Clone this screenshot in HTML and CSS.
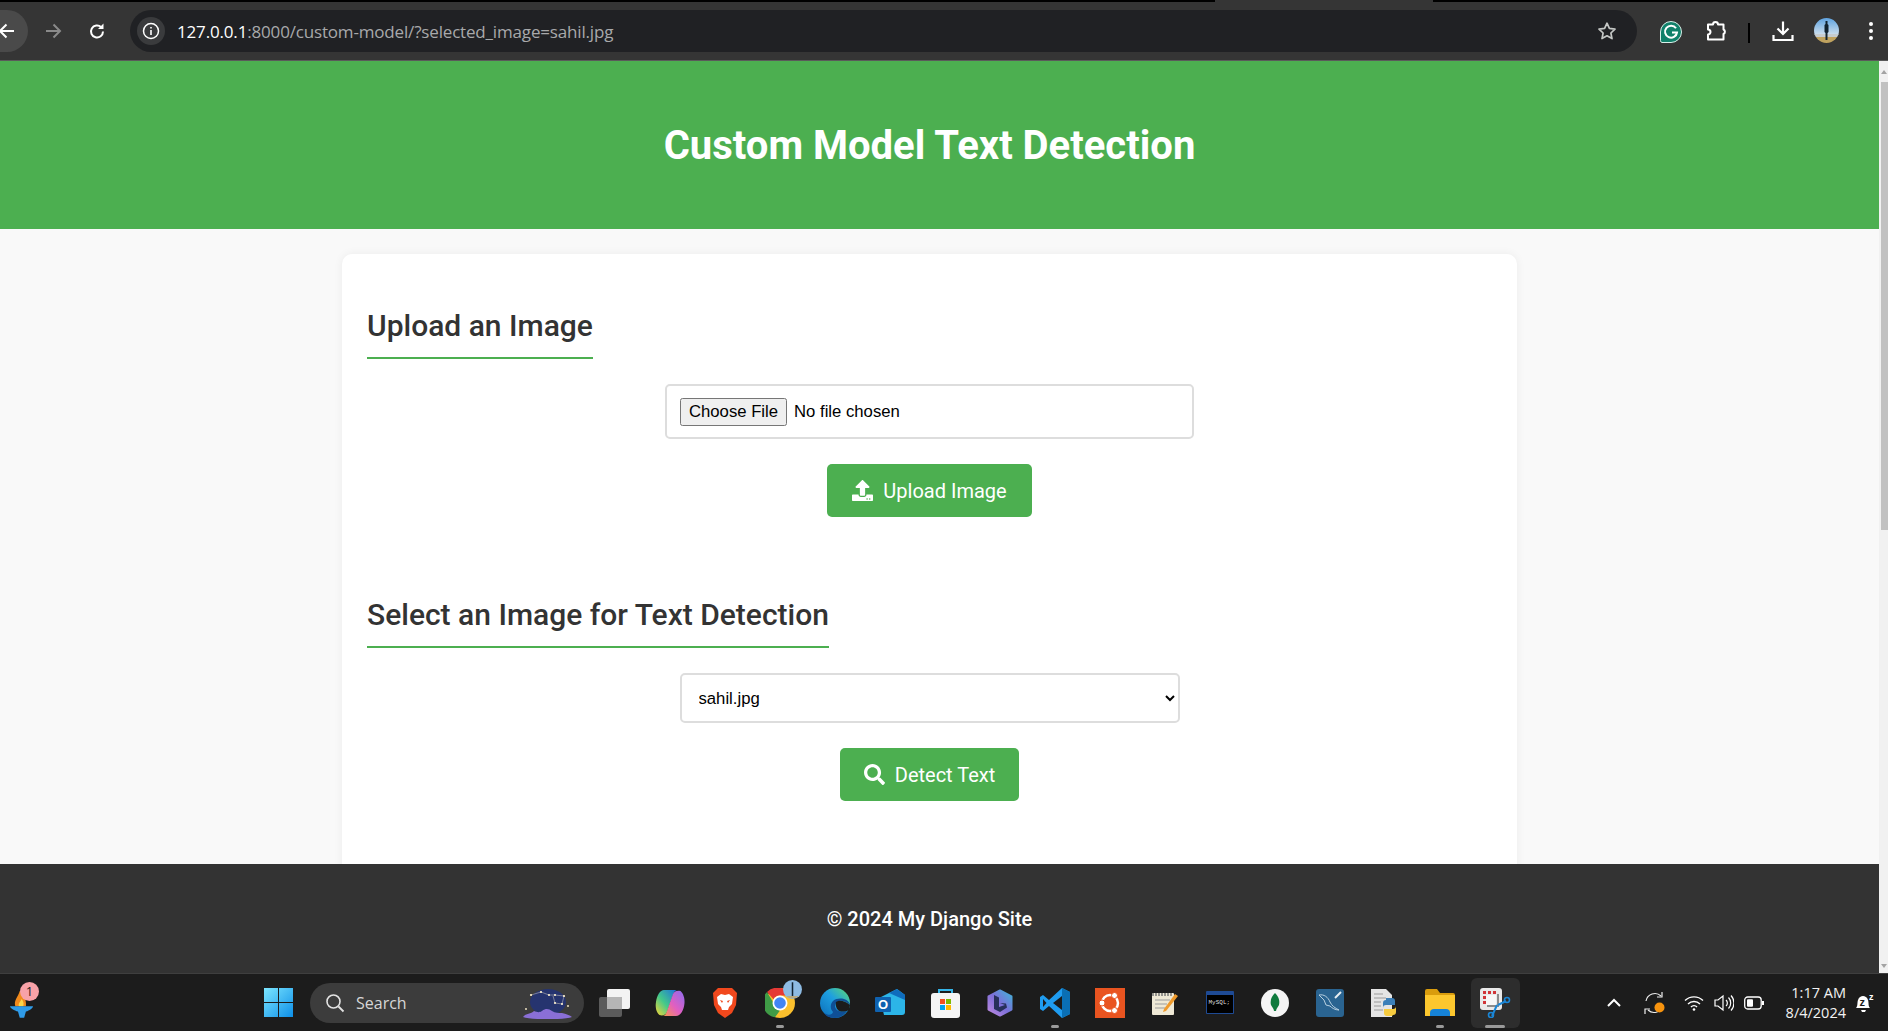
FILE: index.html
```html
<!DOCTYPE html>
<html>
  <head>
    <meta charset="utf-8" />
    <title>Custom Model Text Detection</title>
    <link rel="stylesheet" href="styles.css" />
  </head>
  <body>
    <!-- browser toolbar -->
    <div class="toolbar">
      <div class="tab-strip"><div class="active-tab"></div></div>
      <div class="toolbar-row">
        <div class="back">
          <svg width="20" height="20" viewBox="0 0 20 20"><path d="M17 10H3.500M9.500 3.500 3 10l6.500 6.500" fill="none" stroke="#fff" stroke-width="2"/></svg>
        </div>
        <svg class="fwd" width="20" height="20" viewBox="0 0 20 20"><path d="M3 10h13.500M10.500 3.500 17 10l-6.500 6.500" fill="none" stroke="#8a8a8a" stroke-width="2"/></svg>
        <svg class="reload" width="20" height="20" viewBox="0 0 20 20"><path d="M16 10.500a6 6 0 1 1-1.800-4.300" fill="none" stroke="#fff" stroke-width="2"/><path d="M16.500 2.500v5.500H11z" fill="#fff"/></svg>
        <div class="omnibox">
          <div class="info">
            <svg width="18" height="18" viewBox="0 0 18 18"><circle cx="9" cy="9" r="7.500" fill="none" stroke="#fff" stroke-width="1.500"/><path d="M9 8v5M9 5v1.600" stroke="#fff" stroke-width="1.600"/></svg>
          </div>
          <span class="url"><span class="host">127.0.0.1</span>:8000/custom-model/?selected_image=sahil.jpg</span>
          <svg class="star" width="20" height="20" viewBox="0 0 20 20"><path d="m10 2.200 2.400 5.200 5.600.7-4.100 3.900 1.100 5.600-5-2.800-5 2.800 1.100-5.600L2 8.100l5.600-.7z" fill="none" stroke="#c4c7c5" stroke-width="1.700" stroke-linejoin="round"/></svg>
        </div>
        <svg class="grammarly" width="24" height="24" viewBox="0 0 24 24"><path d="M12 1.500a10.500 10.500 0 1 1 0 21H3a1.800 1.800 0 0 1-1.500-1.800V12A10.500 10.500 0 0 1 12 1.500z" fill="#11806a" stroke="#d8efe9" stroke-width="1"/><path d="M17 8.300a6 6 0 1 0 1 4.200h-5" fill="none" stroke="#fff" stroke-width="2"/></svg>
        <svg class="puzzle" width="24" height="24" viewBox="0 0 24 24"><path d="M4 5.500h5a2.500 2.500 0 0 1 5 0h5.500v5a2.500 2.500 0 0 1 0 4.500v5.500H4v-5a2.500 2.500 0 0 0 0-5z" fill="none" stroke="#fff" stroke-width="2" stroke-linejoin="round"/></svg>
        <div class="divider"></div>
        <svg class="download" width="24" height="24" viewBox="0 0 24 24"><path d="M12 2.500v12M6.500 9.500l5.500 5.500 5.500-5.500M2.500 16v5h19v-5" fill="none" stroke="#fff" stroke-width="2.200"/></svg>
        <svg class="avatar" width="25" height="25" viewBox="0 0 25 25">
          <defs>
            <clipPath id="av"><circle cx="12.500" cy="12.500" r="12.500"/></clipPath>
            <linearGradient id="sky" x1="0" y1="0" x2="0" y2="1"><stop offset="0" stop-color="#5fa3e0"/><stop offset="1" stop-color="#cfe0ee"/></linearGradient>
          </defs>
          <g clip-path="url(#av)">
            <rect width="25" height="17" fill="url(#sky)"/>
            <rect y="16" width="25" height="3" fill="#c7cdd0"/>
            <rect y="19" width="25" height="6" fill="#bfa25f"/>
            <path d="M11.500 3h2v3l1 1v7l-1 1v7h-2v-7l-1-1V7l1-1z" fill="#10222f"/>
          </g>
        </svg>
        <svg class="dots" width="6" height="20" viewBox="0 0 6 20"><circle cx="3" cy="3" r="2" fill="#fff"/><circle cx="3" cy="10" r="2" fill="#fff"/><circle cx="3" cy="17" r="2" fill="#fff"/></svg>
      </div>
    </div>

    <!-- page viewport -->
    <div class="viewport">
      <div class="page">
        <header class="site-header">
          <h1>Custom Model Text Detection</h1>
        </header>
        <div class="content">
          <div class="card">
            <h2>Upload an Image</h2>
            <form class="form">
              <div class="file-box"><input type="file" /></div>
              <button type="button" class="btn">
                <svg width="21" height="21" viewBox="0 0 512 512"><path fill="#fff" d="M296 384h-80c-13.300 0-24-10.700-24-24V192h-87.700c-17.800 0-26.700-21.500-14.100-34.100L242.300 5.700c7.500-7.500 19.800-7.500 27.300 0l152.200 152.200c12.600 12.600 3.700 34.100-14.100 34.100H320v168c0 13.300-10.700 24-24 24zm216-8v112c0 13.300-10.700 24-24 24H24c-13.300 0-24-10.700-24-24V376c0-13.300 10.700-24 24-24h136v8c0 30.900 25.100 56 56 56h80c30.900 0 56-25.100 56-56v-8h136c13.300 0 24 10.700 24 24zm-124 88c0-11-9-20-20-20s-20 9-20 20 9 20 20 20 20-9 20-20zm64 0c0-11-9-20-20-20s-20 9-20 20 9 20 20 20 20-9 20-20z"/></svg>
                Upload Image
              </button>
            </form>
            <h2 class="second">Select an Image for Text Detection</h2>
            <form class="form">
              <select class="picker">
                <option>sahil.jpg</option>
              </select>
              <button type="button" class="btn btn-detect">
                <svg width="21" height="21" viewBox="0 0 512 512"><path fill="#fff" d="M505 442.700L405.300 343c-4.500-4.500-10.600-7-17-7H372c27.600-35.300 44-79.700 44-128C416 93.100 322.900 0 208 0S0 93.100 0 208s93.100 208 208 208c48.300 0 92.700-16.400 128-44v16.300c0 6.400 2.500 12.500 7 17l99.700 99.700c9.400 9.400 24.600 9.400 33.900 0l28.300-28.300c9.400-9.400 9.400-24.600.1-34zM208 336c-70.700 0-128-57.200-128-128 0-70.700 57.200-128 128-128 70.700 0 128 57.200 128 128 0 70.700-57.200 128-128 128z"/></svg>
                Detect Text
              </button>
            </form>
          </div>
        </div>
        <footer class="site-footer">© 2024 My Django Site</footer>
      </div>
      <div class="scrollbar">
        <div class="arrow-up"></div>
        <div class="thumb"></div>
        <div class="arrow-down"></div>
      </div>
    </div>

    <!-- windows taskbar -->
    <div class="taskbar">
      <div class="widget">
        <svg width="23" height="29" viewBox="0 0 26 32">
          <path d="M6 19C4 13 9 9 11 2c3 2 8 9 7 17z" fill="#f08a1d"/>
          <path d="M10 19c-1-3 2-5 3-8 2 2 3 5 2 8z" fill="#fbd54a"/>
          <path d="M0 19h26c0 2-4 5-8 6l-2 7h-5l-2-7c-4-1-9-4-9-6z" fill="#2f9be8"/>
        </svg>
        <span class="badge">1</span>
      </div>
      <svg class="start" width="29" height="29" viewBox="0 0 29 29">
        <defs><linearGradient id="win" x1="0" y1="0" x2="1" y2="1"><stop offset="0" stop-color="#7ce6ff"/><stop offset="1" stop-color="#0d8fe8"/></linearGradient></defs>
        <path d="M0 0h14v14H0zM15 0h14v14H15zM0 15h14v14H0zM15 15h14v14H15z" fill="url(#win)"/>
      </svg>
      <div class="search">
        <svg width="20" height="20" viewBox="0 0 20 20"><circle cx="8.500" cy="8.500" r="6.500" fill="none" stroke="#e3e3e3" stroke-width="1.600"/><path d="m13.500 13.500 5 5" stroke="#e3e3e3" stroke-width="1.800"/></svg>
        <span>Search</span>
        <svg class="search-art" width="50" height="32" viewBox="0 0 50 32">
          <ellipse cx="25" cy="15" rx="18" ry="13" fill="#26346f"/>
          <path d="M0 30c3-4 8-3 11-6 3 1 5 2 8 0 4-3 7-2 10 0 3 2 7 2 10 2 4 1 8 2 10 4-8 3-41 3-49 0z" fill="#8a6fd6"/>
          <path d="M8 8l10-3 8 3 6 0 9 1-2 8-7-1-2-7" fill="none" stroke="#cfc9c0" stroke-width=".5"/>
          <g fill="#fff3cf"><circle cx="8" cy="8" r="1.100"/><circle cx="18" cy="5" r="1.100"/><circle cx="26" cy="8" r="1.100"/><circle cx="32" cy="8" r="1.100"/><circle cx="41" cy="9" r="1.100"/><circle cx="39" cy="17" r="1.100"/><circle cx="32" cy="16" r="1.100"/><circle cx="3" cy="22" r=".9"/><circle cx="45" cy="19" r=".9"/></g>
        </svg>
      </div>
      <div class="apps">
        <!-- task view -->
        <div class="app">
          <svg width="32" height="30" viewBox="0 0 32 30"><rect x="0" y="9" width="23" height="20" rx="2" fill="#5b5b5b"/><rect x="8" y="1" width="23" height="20" rx="2" fill="#f3f3f3"/><rect x="8" y="9" width="15" height="12" fill="#b5b5b5"/></svg>
        </div>
        <!-- copilot -->
        <div class="app">
          <svg width="30" height="28" viewBox="0 0 30 28">
            <defs>
              <linearGradient id="cpa" x1="0" y1="1" x2="1" y2="0"><stop offset="0" stop-color="#f9d532"/><stop offset=".45" stop-color="#43c98a"/><stop offset="1" stop-color="#1c6fe0"/></linearGradient>
              <linearGradient id="cpb" x1="1" y1="0" x2="0" y2="1"><stop offset="0" stop-color="#8b6cf0"/><stop offset=".55" stop-color="#e25fc0"/><stop offset="1" stop-color="#f79a4a"/></linearGradient>
            </defs>
            <path d="M9 1h13c-2 .5-3 2-4 5l-6 17c-1 3-4.500 4-7.500 3C1.500 24 0 18 1 13 2 6 5 1 9 1z" fill="url(#cpa)"/>
            <path d="M21 27H8c2-.5 3-2 4-5l6-17c1-3 4.500-4 7.500-3 2.500 2 4.500 7 4 12-.5 7-4 13-8.500 13z" fill="url(#cpb)"/>
          </svg>
        </div>
        <!-- brave -->
        <div class="app">
          <svg width="26" height="30" viewBox="0 0 26 30">
            <path d="M6 0h14l5 5-1 12-4 8-7 5-7-5-4-8L1 5z" fill="#f1481d"/>
            <path d="M5 9l4-3 4 1 4-1 4 3-1 7-3 3-1 3h-6l-1-3-3-3z" fill="#fff"/>
            <path d="M8 12l3 1-1 2zM18 12l-3 1 1 2z" fill="#f1481d"/>
            <path d="M10.500 22h5L13 25z" fill="#f1481d"/>
          </svg>
        </div>
        <!-- chrome with profile badge -->
        <div class="app running">
          <svg width="30" height="30" viewBox="0 0 30 30">
            <circle cx="15" cy="15" r="15" fill="#fbc02d"/>
            <path d="M15 0a15 15 0 0 1 13 7.500H15a7.500 7.500 0 0 0-6.500 3.750L2 3.900A15 15 0 0 1 15 0z" fill="#e53935"/>
            <path d="M2 3.900l6.500 11.100a7.500 7.500 0 0 0 6.500 7.500L10 29.200A15 15 0 0 1 2 3.900z" fill="#3f9b46"/>
            <circle cx="15" cy="15" r="7.500" fill="#fff"/><circle cx="15" cy="15" r="5.800" fill="#4285f4"/>
          </svg>
          <svg class="chrome-badge" width="19" height="19" viewBox="0 0 25 25"><circle cx="12.500" cy="12.500" r="12.500" fill="#8dbbe3"/><path d="M4 21h17a12.500 12.500 0 0 1-17 0z" fill="#b9a981"/><path d="M11.500 3h2v18h-2z" fill="#10222f"/></svg>
        </div>
        <!-- edge -->
        <div class="app">
          <svg width="30" height="30" viewBox="0 0 30 30">
            <defs>
              <linearGradient id="edg" x1="0" y1="1" x2="1" y2="0"><stop offset="0" stop-color="#0c6cb8"/><stop offset=".55" stop-color="#1e9fe0"/><stop offset="1" stop-color="#5fdc6e"/></linearGradient>
            </defs>
            <circle cx="15" cy="15" r="15" fill="url(#edg)"/>
            <path d="M30 17c-3-3-7-5-11-4-4 1-5 5-3 8 2 3 7 3 11 2-2 3-6 7-12 7-6 0-9-2-11-5 5 3 8 2 9-1-3-3-3-8 0-11 5-4 14-3 17 3z" fill="#0f4f96"/>
            <path d="M16 14c3-2 8-2 14 3l-1 5c-4 2-9 2-11 0-2-2-3-6-2-8z" fill="#1c1c1c"/>
          </svg>
        </div>
        <!-- outlook -->
        <div class="app">
          <svg width="30" height="27" viewBox="0 0 30 27"><path d="M6 8 22 0l8 6v17a3 3 0 0 1-3 3H9l-1-4z" fill="#2cb5e8"/><path d="M14 4 22 0l8 6v5z" fill="#0f6cbd"/><rect x="0" y="8" width="16" height="15" rx="1" fill="#0f62b0"/><text x="8" y="20" class="outlook-o">O</text></svg>
        </div>
        <!-- store -->
        <div class="app">
          <svg width="29" height="30" viewBox="0 0 29 30"><path d="M8 6V2h13v4" fill="none" stroke="#35b5e8" stroke-width="2"/><rect x="0" y="5" width="29" height="25" rx="3" fill="#f4f4f4"/><rect x="9" y="11" width="5" height="5" fill="#f25022"/><rect x="15" y="11" width="5" height="5" fill="#7fba00"/><rect x="9" y="17" width="5" height="5" fill="#00a4ef"/><rect x="15" y="17" width="5" height="5" fill="#ffb900"/></svg>
        </div>
        <!-- bing -->
        <div class="app">
          <svg width="26" height="28" viewBox="0 0 26 28">
            <defs><linearGradient id="bng" x1="0" y1="1" x2="1" y2="0"><stop offset="0" stop-color="#c08ae0"/><stop offset=".5" stop-color="#7c6fd8"/><stop offset="1" stop-color="#3fb5d8"/></linearGradient></defs>
            <path d="M13 1.500l11.500 6v13l-11.500 6-11.500-6v-13z" fill="url(#bng)" stroke="url(#bng)" stroke-width="2" stroke-linejoin="round"/>
            <path d="M7 6l5 2.500V18l6-2-5-2 6 .5 1 4-7 4.500-6-3z" fill="#27305a"/>
          </svg>
        </div>
        <!-- vs code -->
        <div class="app running">
          <svg width="30" height="30" viewBox="0 0 30 30"><path d="M22 0l8 4v22l-8 4-13-12-6 5-3-2v-12l3-2 6 5z" fill="#1f9cf0"/><path d="M22 0l8 4v22l-8 4z" fill="#0a6fb5"/><path d="M22 8v14l-9-7z" fill="#1c1c1c"/><path d="M3 11l3.500 4L3 19z" fill="#1c1c1c"/></svg>
        </div>
        <!-- ubuntu -->
        <div class="app">
          <svg width="30" height="30" viewBox="0 0 30 30"><rect width="30" height="30" fill="#e95420"/><circle cx="15" cy="15" r="8" fill="none" stroke="#fff" stroke-width="2.500"/><circle cx="7" cy="15" r="3" fill="#fff" stroke="#e95420"/><circle cx="19.500" cy="7.500" r="3" fill="#fff" stroke="#e95420"/><circle cx="19.500" cy="22.500" r="3" fill="#fff" stroke="#e95420"/></svg>
        </div>
        <!-- notepad -->
        <div class="app">
          <svg width="26" height="24" viewBox="0 0 26 24"><rect y="2" width="22" height="22" rx="1" fill="#efe9d6"/><path d="M1 2v3M4 2v3M7 2v3M10 2v3M13 2v3M16 2v3M19 2v3" stroke="#777" stroke-width="1.500"/><path d="M3 9h15M3 13h12M3 17h10" stroke="#9b9b9b"/><path d="M12 18 23 3l3 2-12 15-3 1z" fill="#ef9a2c"/></svg>
        </div>
        <!-- mysql shell -->
        <div class="app">
          <svg width="28" height="23" viewBox="0 0 28 23"><rect width="28" height="23" rx="1" fill="#1e4a94"/><rect x="1" y="4" width="26" height="18" fill="#000"/><text x="2.500" y="13" class="mysql-label">MySQL;</text></svg>
        </div>
        <!-- mongo -->
        <div class="app">
          <svg width="28" height="28" viewBox="0 0 28 28"><circle cx="14" cy="14" r="14" fill="#f4f4f4"/><path d="M14 4c4 4 5 8 4 12-1 2-3 4-3 6h-2c0-2-2-4-3-6-1-4 0-8 4-12z" fill="#0f7a3d"/></svg>
        </div>
        <!-- mysql workbench -->
        <div class="app">
          <svg width="28" height="28" viewBox="0 0 28 28"><rect width="28" height="28" rx="3" fill="#2a6491"/><path d="M3 6c5-1 9 2 11 7 2 4 5 6 9 8-4 0-7-2-9-4l-4-1-2-5z" fill="none" stroke="#b8d0e0" stroke-width="1"/><path d="m19 9 6-6" stroke="#e8eef2" stroke-width="2"/></svg>
        </div>
        <!-- python file -->
        <div class="app">
          <svg width="28" height="28" viewBox="0 0 28 28"><path d="M0 0h15l6 6v22H0z" fill="#e4e4e4"/><path d="M3 5h9M3 9h12M3 13h7M3 17h7M3 21h9" stroke="#9a9a9a"/><path d="M15 9h6a3 3 0 0 1 3 3v4h-9a3 3 0 0 0-3 3v-5a3 3 0 0 1 3-3z" fill="#3b7fb8"/><path d="M21 27h-5a3 3 0 0 1-3-3v-4h9a3 3 0 0 0 3-3v6a3 3 0 0 1-3 3z" fill="#f6cb3f"/></svg>
        </div>
        <!-- file explorer -->
        <div class="app running">
          <svg width="30" height="27" viewBox="0 0 30 27"><path d="M0 2a2 2 0 0 1 2-2h10l3 4h13a2 2 0 0 1 2 2v4H0z" fill="#d99c0d"/><path d="M0 6h30v21H0z" fill="#fcc72e"/><path d="M5 27v-3a4 4 0 0 1 4-4h12a4 4 0 0 1 4 4v3z" fill="#1683d8"/></svg>
        </div>
        <!-- snipping tool -->
        <div class="app active">
          <svg width="31" height="30" viewBox="0 0 31 30"><rect width="22" height="22" rx="3" fill="#e9e9e9"/><path d="M3 3h3v3H3zM8 3h3v3H8zM13 3h3v3h-3zM3 8h3v3H3zM3 13h3v3H3z" fill="#d13438"/><path d="M6 7h10v10H6z" fill="#f7f7f7"/><path d="M7 18h11V6" fill="none" stroke="#8b8b8b" stroke-width="2"/><path d="M17 17 12 28M18 17l8-4" stroke="#1a86d6" stroke-width="2"/><circle cx="11" cy="27" r="2.500" fill="none" stroke="#1a86d6" stroke-width="1.600"/><circle cx="27" cy="12" r="2.500" fill="none" stroke="#1a86d6" stroke-width="1.600"/></svg>
        </div>
      </div>
      <div class="tray">
        <svg class="t-chev" width="16" height="10" viewBox="0 0 16 10"><path d="m2 8 6-6 6 6" fill="none" stroke="#fff" stroke-width="2"/></svg>
        <svg class="t-sync" width="22" height="22" viewBox="0 0 22 22"><path d="M2 9a9 9 0 0 1 15-5M19 13a9 9 0 0 1-15 5" fill="none" stroke="#eee" stroke-width="1.200"/><path d="M18 0v5h-5M1 22v-5h5" fill="none" stroke="#eee" stroke-width="1.200"/><circle cx="15.500" cy="15.500" r="5" fill="#f7930e"/></svg>
        <svg class="t-wifi" width="20" height="16" viewBox="0 0 20 16"><path d="M1 5.500a13 13 0 0 1 18 0M4 9a8.500 8.500 0 0 1 12 0M7 12a4 4 0 0 1 6 0" fill="none" stroke="#fff" stroke-width="1.400"/><circle cx="10" cy="14.500" r="1.300" fill="#fff"/></svg>
        <svg class="t-vol" width="20" height="18" viewBox="0 0 20 18"><path d="M1 6h3l5-4v14l-5-4H1z" fill="none" stroke="#fff" stroke-width="1.200"/><path d="M12 6a4 4 0 0 1 0 6M14.500 3.500a8 8 0 0 1 0 11M17 1.500a11 11 0 0 1 0 15" fill="none" stroke="#fff" stroke-width="1.200"/></svg>
        <svg class="t-bat" width="20" height="14" viewBox="0 0 20 14"><rect x=".7" y="1" width="16.500" height="12" rx="3" fill="none" stroke="#fff" stroke-width="1.300"/><rect x="3" y="3.200" width="6" height="7.600" rx="1" fill="#fff"/><rect x="18" y="5" width="2" height="4" fill="#fff"/></svg>
        <div class="clock">
          <span>1:17 AM</span>
          <span>8/4/2024</span>
        </div>
        <svg class="t-bell" width="20" height="20" viewBox="0 0 20 20"><path d="M1 15c2-2 1-5 2-8 1-3 3-4 5-4s4 1 5 4c1 3 0 6 2 8z" fill="#fff"/><path d="M6 17h5l-1 2H7z" fill="#fff"/><text x="4.500" y="13" class="bell-z">z</text><text x="14" y="7" class="bell-zz">z</text></svg>
      </div>
    </div>
  </body>
</html>
```

FILE: styles.css
```css
* {
  box-sizing: border-box;
}

html,
body {
  margin: 0;
  overflow: hidden;
}

body {
  height: 1031px;
  font-family: Roboto, sans-serif;
  background-color: #1c1c1c;
  display: flex;
  flex-direction: column;
}

/* browser toolbar */
.toolbar {
  height: 61px;
  background-color: #353535;
  border-bottom: 1px solid #5a5a5a;
  flex-shrink: 0;
}

.tab-strip {
  height: 2px;
  padding-left: 1215px;
  background-color: #000;
}

.active-tab {
  width: 218px;
  height: 2px;
  background-color: #353535;
}

.toolbar-row {
  height: 58px;
  padding-top: 8px;
  display: flex;
  align-items: flex-start;
}

.back {
  width: 28px;
  height: 42px;
  background-color: #4a4a4a;
  border-radius: 0 21px 21px 0;
  display: flex;
  align-items: center;
  justify-content: flex-end;
  padding-right: 11px;
  overflow: hidden;
}

.back svg {
  flex-shrink: 0;
}

.fwd {
  margin: 11px 0 0 15px;
}

.reload {
  margin: 11px 0 0 24px;
}

.omnibox {
  width: 1507px;
  height: 42px;
  margin-left: 23px;
  padding: 0 20px 0 7px;
  background-color: #202124;
  border-radius: 21px;
  display: flex;
  align-items: center;
}

.info {
  width: 28px;
  height: 28px;
  border-radius: 50%;
  background-color: #3a3b3d;
  display: flex;
  align-items: center;
  justify-content: center;
}

.url {
  margin-left: 12px;
  font-family: "Open Sans", sans-serif;
  font-size: 17px;
  letter-spacing: -0.17px;
  color: #a8a9ab;
}

.host {
  color: #fff;
}

.star {
  margin-left: auto;
}

.grammarly {
  margin: 10px 0 0 22px;
}

.puzzle {
  margin: 9px 0 0 21px;
}

.divider {
  width: 2px;
  height: 20px;
  margin: 13px 0 0 20px;
  background-color: #000;
}

.download {
  margin: 9px 0 0 21px;
}

.avatar {
  margin: 8px 0 0 19px;
}

.dots {
  margin: 11px 0 0 29px;
}

/* page */
.viewport {
  height: 912px;
  display: flex;
  flex-shrink: 0;
}

.page {
  flex: 1;
  min-width: 0;
  background-color: #f9f9f9;
  display: flex;
  flex-direction: column;
}

.site-header {
  height: 168px;
  padding-right: 20px;
  background-color: #4caf50;
  display: flex;
  align-items: center;
  justify-content: center;
  flex-shrink: 0;
}

h1 {
  margin: 0;
  font-size: 40px;
  font-weight: 700;
  color: #fff;
}

.content {
  flex: 1;
  min-height: 0;
  padding: 25px 20px 0 0;
  overflow: hidden;
}

.card {
  width: 1175px;
  margin: 0 auto;
  padding: 54px 25px 100px;
  background-color: #fff;
  border-radius: 10px;
  box-shadow: 0 0 10px rgba(0, 0, 0, 0.06);
}

h2 {
  display: table;
  margin: 0;
  padding-bottom: 14px;
  border-bottom: 2px solid #4caf50;
  font-size: 30px;
  line-height: 35px;
  font-weight: 500;
  color: #333;
}

h2.second {
  margin-top: 80px;
}

.form {
  margin-top: 25px;
  display: flex;
  flex-direction: column;
  align-items: center;
  gap: 25px;
}

.file-box {
  width: 529px;
  height: 55px;
  padding: 12px 13px;
  border: 2px solid #ddd;
  border-radius: 5px;
}

.file-box input {
  width: 100%;
  font-family: "Liberation Sans", sans-serif;
  font-size: 16.7px;
}

.file-box input::file-selector-button {
  padding: 2px 7px;
  margin-right: 7px;
}

.picker {
  width: 500px;
  height: 50px;
  padding: 0 17px 0 13px;
  border: 2px solid #ddd;
  border-radius: 5px;
  background-color: #fff;
  font-family: "Liberation Sans", sans-serif;
  font-size: 16.7px;
  color: #000;
}

.btn {
  height: 53px;
  padding: 0 25px;
  border: 0;
  border-radius: 5px;
  background-color: #4caf50;
  color: #fff;
  font-family: Roboto, sans-serif;
  font-size: 20px;
  display: flex;
  align-items: center;
  gap: 10px;
}

.btn-detect {
  padding: 0 24px;
}

.site-footer {
  height: 109px;
  padding-right: 20px;
  background-color: #333;
  color: #fff;
  font-size: 20px;
  font-weight: 500;
  display: flex;
  align-items: center;
  justify-content: center;
  flex-shrink: 0;
}

.scrollbar {
  width: 9px;
  background-color: #f1f1f1;
  display: flex;
  flex-direction: column;
  align-items: flex-end;
}

.arrow-up,
.arrow-down {
  width: 7px;
  height: 21px;
  flex-shrink: 0;
  position: relative;
}

.arrow-up::after,
.arrow-down::after {
  content: "";
  position: absolute;
  left: 0;
  border-left: 3.5px solid transparent;
  border-right: 3.5px solid transparent;
}

.arrow-up::after {
  top: 9px;
  border-bottom: 4px solid #a3a3a3;
}

.arrow-down::after {
  bottom: 5px;
  border-top: 4px solid #a3a3a3;
}

.thumb {
  width: 7px;
  height: 448px;
  background-color: #c1c1c1;
}

.arrow-down {
  margin-top: auto;
}

/* taskbar */
.taskbar {
  height: 58px;
  background-color: #1c1c1c;
  border-top: 1px solid #3f3f3f;
  display: flex;
  align-items: center;
  flex-shrink: 0;
}

.widget {
  width: 30px;
  height: 36px;
  margin-left: 9px;
  padding: 0 0 3px 1px;
  position: relative;
  display: flex;
  align-items: flex-end;
}

.badge {
  position: absolute;
  top: -3px;
  left: 11px;
  width: 19px;
  height: 19px;
  border-radius: 50%;
  background-color: #f8a2a8;
  color: #222;
  font-family: "Open Sans", sans-serif;
  font-size: 13px;
  line-height: 19px;
  text-align: center;
}

.start {
  margin-left: 225px;
}

.search {
  width: 274px;
  height: 40px;
  margin-left: 17px;
  padding: 0 6px 0 15px;
  border-radius: 20px;
  background-color: #3c3c3c;
  color: #d6d6d6;
  font-family: "Open Sans", sans-serif;
  font-size: 16px;
  display: flex;
  align-items: center;
  gap: 11px;
}

.search-art {
  margin-left: auto;
  margin-right: 5px;
}

.apps {
  margin-left: 3.5px;
  display: flex;
  align-items: center;
}

.app {
  width: 55px;
  height: 50px;
  display: flex;
  align-items: center;
  justify-content: center;
  position: relative;
}

.app.running::after,
.app.active::after {
  content: "";
  position: absolute;
  bottom: 0;
  left: 50%;
  width: 8px;
  height: 3px;
  margin-left: -4px;
  border-radius: 2px;
  background-color: #9a9a9a;
}

.app.active::before {
  content: "";
  position: absolute;
  left: 3px;
  top: 0;
  width: 49px;
  height: 50px;
  border-radius: 6px;
  background-color: #2d2d2d;
}

.app.active::after {
  width: 20px;
  margin-left: -10px;
}

.app.active svg {
  position: relative;
}

.chrome-badge {
  position: absolute;
  top: 2px;
  left: 30px;
}

.outlook-o {
  font-family: "Liberation Sans", sans-serif;
  font-size: 13px;
  font-weight: 700;
  fill: #fff;
  text-anchor: middle;
}

.mysql-label {
  font-family: "Liberation Mono", monospace;
  font-size: 6px;
  fill: #ddd;
}

.tray {
  margin-left: auto;
  display: flex;
  align-items: center;
}

.t-sync {
  margin-left: 22px;
}

.t-wifi {
  margin-left: 18px;
}

.t-vol {
  margin-left: 10px;
}

.t-bat {
  margin-left: 10px;
}

.clock {
  width: 80px;
  margin-left: 2px;
  display: flex;
  flex-direction: column;
  align-items: flex-end;
  color: #f2f2f2;
  font-family: "Open Sans", sans-serif;
  font-size: 14.5px;
  line-height: 20px;
}

.t-bell {
  margin: 0 13px 0 9px;
}

.bell-z {
  font-family: "Liberation Sans", sans-serif;
  font-size: 11px;
  font-weight: 700;
  fill: #1c1c1c;
}

.bell-zz {
  font-family: "Liberation Sans", sans-serif;
  font-size: 9px;
  font-weight: 700;
  fill: #fff;
}
```
